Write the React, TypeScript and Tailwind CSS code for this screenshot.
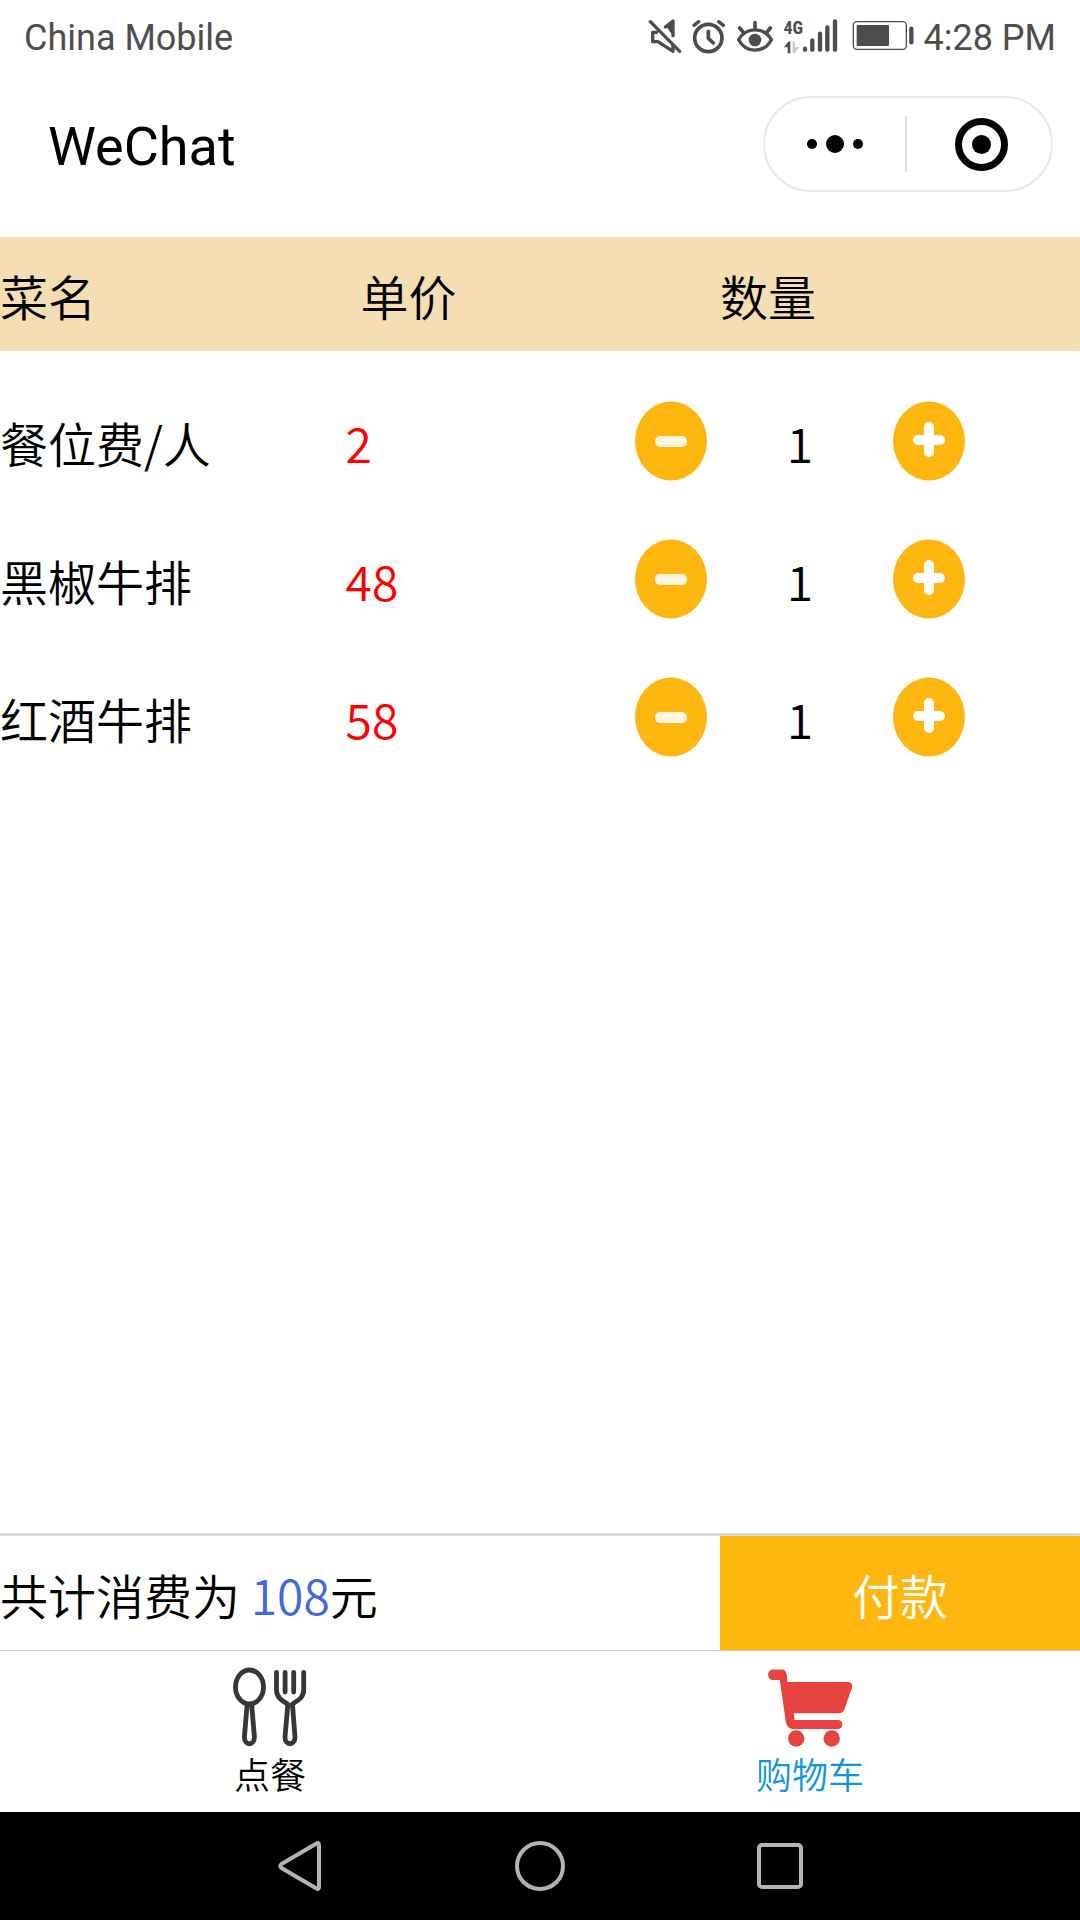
import { useState } from "react";

type Dish = { name: string; price: number; count: number };

const initialDishes: Dish[] = [
  { name: "餐位费/人", price: 2, count: 1 },
  { name: "黑椒牛排", price: 48, count: 1 },
  { name: "红酒牛排", price: 58, count: 1 },
];

function MuteIcon() {
  return (
    <svg className="h-9 w-[34px]" viewBox="54 54 102 108" fill="none" stroke="currentColor" strokeWidth="10" strokeLinecap="round" strokeLinejoin="round" aria-hidden="true">
      <path d="M61 65 149 154" />
      <path d="M80 97H68V125H84L129 154V138" />
      <path d="M106 81 129 63V107" />
      <path d="M113 82 129 68V104Z" fill="currentColor" strokeWidth="4" />
    </svg>
  );
}

function AlarmIcon() {
  return (
    <svg className="h-9 w-[34px]" viewBox="186 54 102 108" fill="none" stroke="currentColor" strokeLinecap="round" strokeLinejoin="round" aria-hidden="true">
      <circle cx="235" cy="114" r="41" strokeWidth="11" />
      <path d="M192 76 206 65M280 76 266 65" strokeWidth="10" />
      <path d="M235 94V115L250 129" strokeWidth="11" />
    </svg>
  );
}

function EyeIcon() {
  return (
    <svg className="h-9 w-[38px]" viewBox="318 54 114 108" fill="none" stroke="currentColor" strokeLinecap="round" strokeLinejoin="round" aria-hidden="true">
      <path d="M326 119C348 80 402 80 424 119C402 161 348 161 326 119Z" strokeWidth="10" />
      <circle cx="375" cy="120" r="19" fill="currentColor" stroke="none" />
      <path d="M375 68V86M329 84 338 95M421 84 412 95" strokeWidth="11" />
    </svg>
  );
}

function SignalIcon() {
  return (
    <div className="flex h-9 w-[54px] items-end">
      <div className="flex h-9 w-[18px] flex-col justify-between">
        <span className="font-['Roboto_Condensed',sans-serif] text-lg leading-5 font-bold">4G</span>
        <svg className="h-[13px] w-4" viewBox="466 120 48 38" aria-hidden="true">
          <path d="M466 138 479 121H485V156H477V138Z" fill="currentColor" />
          <path d="M492 121H499V138H512L498 156H492Z" fill="#c8c8c8" />
        </svg>
      </div>
      <svg className="h-9 w-9" viewBox="516 54 108 108" fill="none" stroke="currentColor" strokeWidth="13" strokeLinecap="round" aria-hidden="true">
        <path d="M525 146V149M547 121V149M570 101V149M592 82V149M615 64V149" />
      </svg>
    </div>
  );
}

function BatteryIcon() {
  return (
    <svg className="h-9 w-[62px]" viewBox="666 54 186 108" fill="none" aria-hidden="true">
      <rect x="670" y="65" width="159" height="83" rx="11" stroke="currentColor" strokeWidth="4" />
      <rect x="680" y="75" width="97" height="63" rx="3" fill="currentColor" />
      <path d="M844 86V127" stroke="currentColor" strokeWidth="13" strokeLinecap="round" />
    </svg>
  );
}

function MinusIcon() {
  return (
    <svg className="h-20 w-18" viewBox="0 0 72 80" aria-hidden="true">
      <ellipse cx="36" cy="40" rx="36" ry="39.5" fill="#ffb70f" />
      <rect x="20" y="35" width="32" height="11" rx="5" fill="#fff6df" />
    </svg>
  );
}

function PlusIcon() {
  return (
    <svg className="h-20 w-18" viewBox="0 0 72 80" aria-hidden="true">
      <ellipse cx="36" cy="40" rx="36" ry="39.5" fill="#ffb70f" />
      <path d="M25 39H47M36 26V51" stroke="#fff" strokeWidth="10" strokeLinecap="round" />
    </svg>
  );
}

function CutleryIcon() {
  return (
    <svg className="h-20 w-[76px]" viewBox="0 0 76 80" fill="none" stroke="#363636" strokeWidth="4.8" strokeLinecap="round" strokeLinejoin="round" aria-hidden="true">
      <ellipse cx="17.5" cy="20" rx="14" ry="17" />
      <path d="M15 39 12.4 70C12.400 79 22.400 79 22.400 70L19.800 39" />
      <path d="M44.500 5.400V23C44.500 31 51 34 55.500 37M71.700 5.400V23C71.700 31 65 34 60.500 37" />
      <path d="M53.100 5.400V25M61.700 5.400V25" />
      <path d="M55.800 38 53 70C53 79 63 79 63 70L60.500 38" />
    </svg>
  );
}

function CartIcon() {
  return (
    <svg className="h-20 w-[86px]" viewBox="0 0 86 80" fill="#e64340" aria-hidden="true">
      <path d="M6 2.500H15C18 2.500 19.500 5 19.800 8L20.500 15H81C84 15 86 17.500 85 20.500L78 41C76.500 45 75 46.300 71 46.300H26.800L27.500 53H71.500C76.500 53 76.500 62 71.500 62H26C22 62 19.500 59 18.700 54L12.800 13H6C-0.500 13-0.500 2.500 6 2.500Z" />
      <circle cx="29.200" cy="71.500" r="8.200" />
      <circle cx="64.700" cy="71.500" r="8.200" />
    </svg>
  );
}

export default function App() {
  const [dishes, setDishes] = useState(initialDishes);
  const total = dishes.reduce((sum, d) => sum + d.price * d.count, 0);
  const change = (index: number, step: number) =>
    setDishes(dishes.map((d, i) => (i === index ? { ...d, count: Math.max(0, d.count + step) } : d)));

  return (
    <div className="flex min-h-screen flex-col bg-white font-['Noto_Sans_CJK_SC_DemiLight','Noto_Sans_CJK_SC',sans-serif] text-5xl text-black">
      <div className="flex h-[72px] items-center justify-between px-6 font-['Roboto',sans-serif] text-4xl text-[#4d4d4d]">
        <span className="pt-1">China Mobile</span>
        <div className="flex items-center gap-2.5">
          <MuteIcon />
          <AlarmIcon />
          <EyeIcon />
          <SignalIcon />
          <div className="flex items-center gap-2.5 pl-1">
            <BatteryIcon />
            <time className="pt-1">4:28 PM</time>
          </div>
        </div>
      </div>

      <header className="flex h-[165px] items-start justify-between pt-6 pr-[27px] pl-12">
        <h1 className="font-['Roboto',sans-serif] text-[54px] leading-[102px]">WeChat</h1>
        <div className="flex h-24 w-[290px] items-center rounded-full border-2 border-[#e8e8e8]">
          <button type="button" aria-label="More" className="flex h-full flex-1 items-center justify-center gap-[9px]">
            <span className="size-2.5 rounded-full bg-black" />
            <span className="size-[18px] rounded-full bg-black" />
            <span className="size-2.5 rounded-full bg-black" />
          </button>
          <span className="h-14 w-0.5 bg-[#dedede]" />
          <button type="button" aria-label="Close" className="flex h-full flex-1 items-center justify-center pl-1">
            <span className="flex size-[53px] items-center justify-center rounded-full border-7 border-black">
              <span className="size-[19px] rounded-full bg-black" />
            </span>
          </button>
        </div>
      </header>

      <main className="flex-1">
        <table className="w-full table-fixed border-collapse text-left">
          <thead className="bg-[#f5deb3]">
            <tr className="h-[114px]">
              <th className="w-[32%] p-0 pt-0.5 font-normal">菜名</th>
              <th className="w-[23%] p-0 pt-0.5 pl-[15px] font-normal">单价</th>
              <th className="p-0 pt-0.5 pl-[126px] font-normal">数量</th>
            </tr>
          </thead>
          <tbody className="before:block before:h-[21px] before:content-['']">
            {dishes.map((dish, i) => (
              <tr key={dish.name} className="h-[138px]">
                <td className="p-0 pt-0.5">{dish.name}</td>
                <td className="p-0 pt-0.5 text-[#ff0000]">{dish.price}</td>
                <td className="p-0 pl-[41px]">
                  <div className="flex items-center">
                    <button type="button" aria-label={`减少 ${dish.name}`} onClick={() => change(i, -1)}>
                      <MinusIcon />
                    </button>
                    <output className="w-[186px] pt-0.5 text-center">{dish.count}</output>
                    <button type="button" aria-label={`增加 ${dish.name}`} onClick={() => change(i, 1)}>
                      <PlusIcon />
                    </button>
                  </div>
                </td>
              </tr>
            ))}
          </tbody>
        </table>
      </main>

      <section className="flex h-[117px] border-t-3 border-[#dcdcdc]">
        <p className="flex flex-2 items-center pt-0.5">
          <span>
            共计消费为 <span className="text-[#4169e1]">{total}</span>元
          </span>
        </p>
        <button type="button" className="flex-1 bg-[#ffb70f] pt-0.5 text-white">
          付款
        </button>
      </section>

      <nav className="flex h-[162px] border-t border-[#c8c8c8] text-4xl leading-[52px]">
        <a href="#order" className="flex flex-1 flex-col items-center pt-4">
          <CutleryIcon />
          <span>点餐</span>
        </a>
        <a href="#cart" aria-current="page" className="flex flex-1 flex-col items-center pt-4 text-[#1296db]">
          <CartIcon />
          <span>购物车</span>
        </a>
      </nav>

      <div className="flex h-27 justify-center bg-black text-[#b3b3b3]">
        <button type="button" aria-label="Back" className="flex w-60 items-center justify-center">
          <svg className="h-[50px] w-11" viewBox="0 0 44 50" fill="none" stroke="currentColor" strokeWidth="4" strokeLinejoin="round" aria-hidden="true">
            <path d="M38.500 2.500Q41 1 41 4V46Q41 49 38.500 47.500L3.500 27Q1 25 3.500 23Z" />
          </svg>
        </button>
        <button type="button" aria-label="Home" className="flex w-60 items-center justify-center">
          <span className="size-[50px] rounded-full border-4 border-current" />
        </button>
        <button type="button" aria-label="Recent apps" className="flex w-60 items-center justify-center">
          <span className="size-[46px] rounded-[5px] border-4 border-current" />
        </button>
      </div>
    </div>
  );
}
